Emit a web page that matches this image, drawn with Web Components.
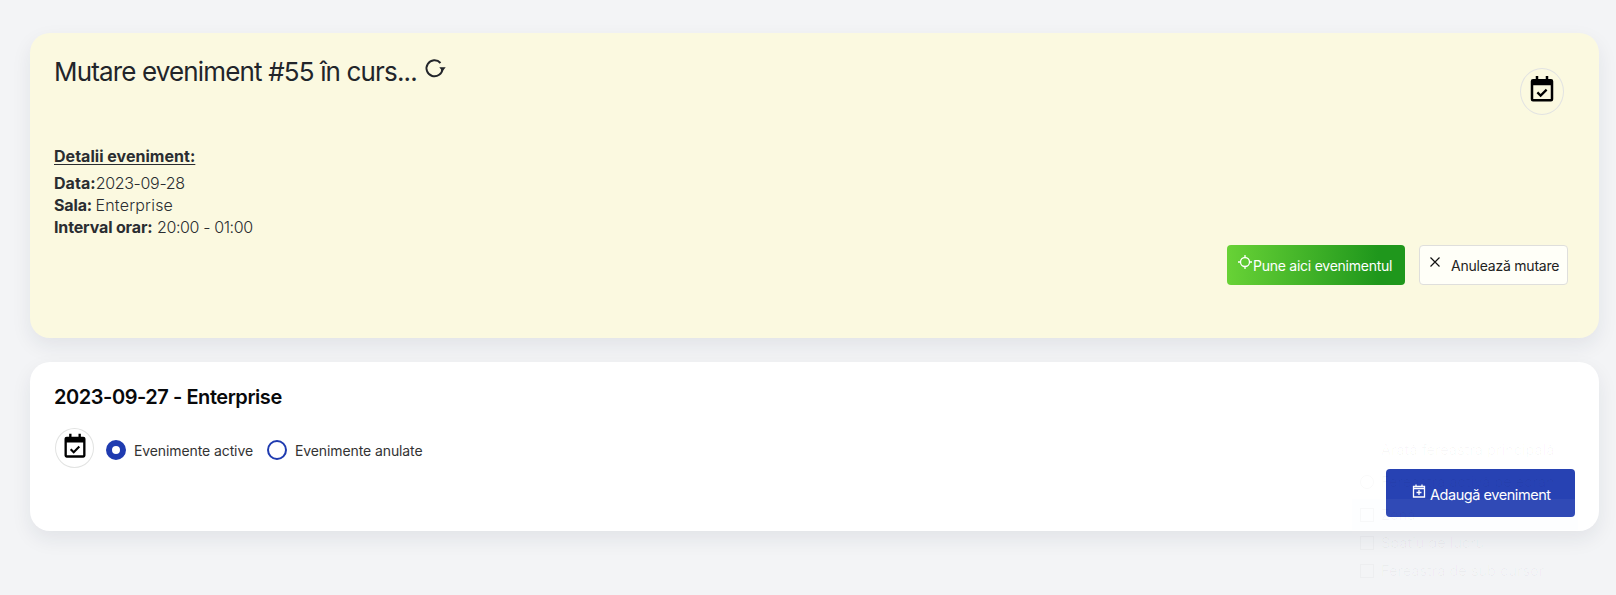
<!DOCTYPE html>
<html><head><meta charset="utf-8">
<style>
html,body{margin:0;padding:0;height:595px;overflow:hidden;background:#f3f4f6;font-family:"Inter","Noto Sans",sans-serif;}
</style></head><body>
<app-page></app-page>
<script>
const CAL='<svg viewBox="0 0 24 24" width="100%" height="100%"><path fill="currentColor" d="M7 1.500h2V4h6V1.500h2V4h2.200A1.800 1.800 0 0 1 21 5.800v14.400a1.800 1.800 0 0 1-1.800 1.800H4.800A1.800 1.800 0 0 1 3 20.200V5.800A1.800 1.800 0 0 1 4.800 4H7zM5 9v11h14V9z"/><path fill="none" stroke="currentColor" stroke-width="1.800" d="M8.300 14.700l2.600 2.600 4.800-4.800"/></svg>';
const def=(n,css,html)=>customElements.define(n,class extends HTMLElement{constructor(){super();this.attachShadow({mode:'open'}).innerHTML='<style>'+css+'</style>'+html;}});
def('cal-badge',`:host{display:flex;align-items:center;justify-content:center;box-sizing:border-box;border:1px solid #e2e3e2;border-radius:50%;color:#000;flex:none;width:var(--w,39px);height:var(--h,40px)}
div{width:var(--i,28px);height:var(--i,28px);margin-top:var(--mt,-5px)}`,`<div>${CAL}</div>`);
def('ui-card',`:host{display:block;box-sizing:border-box;border-radius:20px;padding:24px;background:var(--bg,#fff);box-shadow:0 8px 20px rgba(30,40,60,.08);position:relative}`,`<slot></slot>`);
def('ui-button',`:host{display:inline-flex;align-items:center;box-sizing:border-box;font-size:14px;white-space:nowrap;flex:none}`,`<slot></slot>`);
def('ui-radio',`:host{display:inline-flex;align-items:center;gap:8px;font-size:14px;color:#333;letter-spacing:-.1px}
i{display:block;box-sizing:border-box;width:20px;height:20px;border-radius:50%;border:2px solid #1f3bb0;background:#fff}
:host([checked]) i{border:6.500px solid #1f3bb0}`,`<i></i><slot></slot>`);
def('ghost-menu',`:host{display:block;position:absolute;left:1352px;top:435px;width:226px;height:160px;overflow:hidden;background:rgba(255,255,255,.04);font-size:14.500px;line-height:14px;color:rgba(0,0,0,.03);pointer-events:none}
div{display:flex;align-items:center;gap:7px;height:26px;padding-left:8px;white-space:nowrap}
.r1{height:30px}.r2{height:34px}.r3{height:31px}.r5{height:30px}
div.r3{background:rgba(225,232,255,.05)}
b{display:block;box-sizing:border-box;width:14px;height:14px;border:1px solid rgba(0,0,0,.025);font-weight:400;flex:none}
b.o{border-radius:50%}b.n{border-color:transparent}`,`<div class="r1"><b class="n"></b>Arată fereastra principală</div><div class="r2"><b class="o"></b>Fereastra activă pe ecran</div><div class="r3"><b></b>Zonă</div><div class="r4"><b></b>Spațiu de lucru</div><div class="r5"><b></b>Fereastra de sub cursor</div>`);
def('app-page',`:host{display:block;box-sizing:border-box;width:1616px;height:595px;padding:33px 17px 0 30px;position:relative;color:#1f2227}
.y{--bg:#fbf9e0;height:305px;display:block;margin-bottom:24px}
.top{display:flex;justify-content:space-between;align-items:flex-start}
h1{margin:0;font-size:26px;font-weight:400;line-height:28px;letter-spacing:-.85px;display:flex;padding-top:1px;color:#22252a}
h1 svg{width:24px;height:24px;margin:-2px 0 0 6px;flex:none}
.y cal-badge{--w:44px;--h:47px;--i:30px;--mt:-6px;margin:11px 11px 0 0}
.d{font-size:16px;line-height:22px;color:#2a2d31;font-weight:350;margin-top:30px}
.d u{display:block;font-weight:700;margin-bottom:5px;letter-spacing:.03px;text-underline-offset:2px}
.d b{font-weight:700;letter-spacing:-.15px}
.d .k{letter-spacing:.05px}
.n{letter-spacing:-.38px}
.n2{letter-spacing:-.32px}
.s{margin-left:-1px;letter-spacing:.2px}
.acts{display:flex;justify-content:flex-end;gap:14px;margin-top:7px;padding-right:7px}
.g{width:178px;height:40px;border-radius:4px;background:linear-gradient(90deg,#68d236,#1f971c 85%);color:#fff;padding-left:11px;letter-spacing:-.25px}
.g svg{width:14px;height:14px;margin:-6px 1px 0 0;flex:none}
.c{width:149px;height:40px;border-radius:4px;background:#fffff8;border:1px solid #dfdfdc;color:#222;padding-left:10px;letter-spacing:-.22px}
.c svg{width:10px;height:10px;margin:-6px 11px 0 0}
.w{height:169px;display:block}
h2{margin:0;font-size:20px;font-weight:600;line-height:24px;color:#08090b;letter-spacing:-.45px;position:relative;top:-1px}
.r{display:flex;align-items:center;gap:12px;margin-top:18px;padding-left:1px}
.r ui-radio{position:relative;top:2px}
.r ui-radio+ui-radio{margin-left:2px}
.b{display:flex;justify-content:flex-end;margin-top:1px}
.add{width:189px;height:48px;border-radius:4px;background:#1f3bb0;color:#fff;padding:3px 0 0 26px;letter-spacing:-.45px;font-size:14.500px;line-height:14px;position:relative}
.add svg{width:14px;height:14px;margin:-8px 4px 0 0}`,
`<ui-card class="y">
<div class="top"><h1>Mutare eveniment #55 în curs...<svg viewBox="0 0 24 24"><path fill="none" stroke="currentColor" stroke-width="2" d="M19.500 12.500A8 8 0 1 1 17.500 7"/><path fill="currentColor" d="M16.300 11.300h6.400l-3.200 3.900z"/></svg></h1><cal-badge></cal-badge></div>
<div class="d"><u>Detalii eveniment:</u><div><b class="k">Data:</b><span class="n2">2023-09-28</span></div><div><b>Sala:</b> <span class="s">Enterprise</span></div><div><b>Interval orar:</b> <span class="n">20:00 - 01:00</span></div></div>
<div class="acts"><ui-button class="g"><svg viewBox="0 0 14 14"><circle cx="7" cy="7" r="4.500" fill="none" stroke="#fff" stroke-width="1.300"/><path stroke="#fff" stroke-width="1.300" d="M7 0v3M7 11v3M0 7h3M11 7h3"/></svg>Pune aici evenimentul</ui-button><ui-button class="c"><svg viewBox="0 0 10 10"><path stroke="#111" stroke-width="1.200" d="M.5.5l9 9M9.500.5l-9 9"/></svg>Anulează mutare</ui-button></div>
</ui-card>
<ui-card class="w">
<h2>2023-09-27 - Enterprise</h2>
<div class="r"><cal-badge></cal-badge><ui-radio checked>Evenimente active</ui-radio><ui-radio>Evenimente anulate</ui-radio></div>
<div class="b"><ui-button class="add"><svg viewBox="0 0 14 14"><path fill="none" stroke="#fff" stroke-width="1.300" d="M1.500 2.500h11v10.500h-11z"/><path stroke="#fff" stroke-width="1.300" d="M1.500 4.500h11M4 0.500v2M10 0.500v2M7 6v5M4.500 8.500h5"/></svg>Adaugă eveniment</ui-button></div>
</ui-card>
<ghost-menu></ghost-menu>`);
</script>
</body></html>
